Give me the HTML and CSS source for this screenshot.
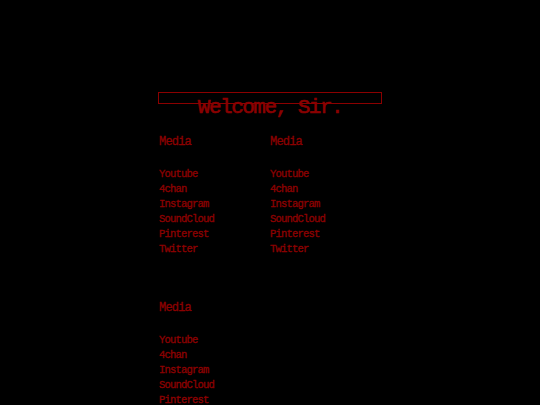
FILE: index.html
```html
<!DOCTYPE html>
<html lang="en">
<head>
<meta charset="utf-8">
<title>Welcome</title>
<link rel="stylesheet" href="styles.css">
</head>
<body>
<div class="wrap">
  <h1 class="title">Welcome, Sir.</h1>
  <div class="grid">
    <section class="col">
      <h2 class="col-title">Media</h2>
      <ul class="links">
        <li><a href="#">Youtube</a></li>
        <li><a href="#">4chan</a></li>
        <li><a href="#">Instagram</a></li>
        <li><a href="#">SoundCloud</a></li>
        <li><a href="#">Pinterest</a></li>
        <li><a href="#">Twitter</a></li>
      </ul>
    </section>
    <section class="col">
      <h2 class="col-title">Media</h2>
      <ul class="links">
        <li><a href="#">Youtube</a></li>
        <li><a href="#">4chan</a></li>
        <li><a href="#">Instagram</a></li>
        <li><a href="#">SoundCloud</a></li>
        <li><a href="#">Pinterest</a></li>
        <li><a href="#">Twitter</a></li>
      </ul>
    </section>
    <section class="col">
      <h2 class="col-title">Media</h2>
      <ul class="links">
        <li><a href="#">Youtube</a></li>
        <li><a href="#">4chan</a></li>
        <li><a href="#">Instagram</a></li>
        <li><a href="#">SoundCloud</a></li>
        <li><a href="#">Pinterest</a></li>
        <li><a href="#">Twitter</a></li>
      </ul>
    </section>
  </div>
</div>
</body>
</html>
```
FILE: styles.css
```css
html, body {
  margin: 0;
  padding: 0;
  background: #000;
}
body {
  font-family: "Liberation Mono", "Courier New", monospace;
  color: #8b0000;
  overflow: hidden;
  height: 405px;
  -webkit-text-stroke: 0.35px #8b0000;
}
.wrap {
  width: 224px;
  margin: 92px auto 0;
}
.title {
  box-sizing: border-box;
  height: 12px;
  margin: 0;
  border: 1px solid #8b0000;
  font-size: 21px;
  font-weight: normal;
  letter-spacing: -1.5px;
  line-height: 29px;
  text-align: center;
  white-space: nowrap;
  overflow: visible;
  -webkit-text-stroke: 0.6px #8b0000;
}
.grid {
  display: grid;
  grid-template-columns: 111px 111px;
  padding-left: 1px;
  margin-top: 31px;
  row-gap: 44px;
}
.col-title {
  margin: 0;
  font-size: 12px;
  font-weight: normal;
  letter-spacing: -0.8px;
  line-height: 15px;
}
.links {
  list-style: none;
  margin: 17px 0 0;
  padding: 0;
  font-size: 10.5px;
  letter-spacing: -0.8px;
  line-height: 15px;
}
.links a {
  color: #8b0000;
  text-decoration: none;
}
```
